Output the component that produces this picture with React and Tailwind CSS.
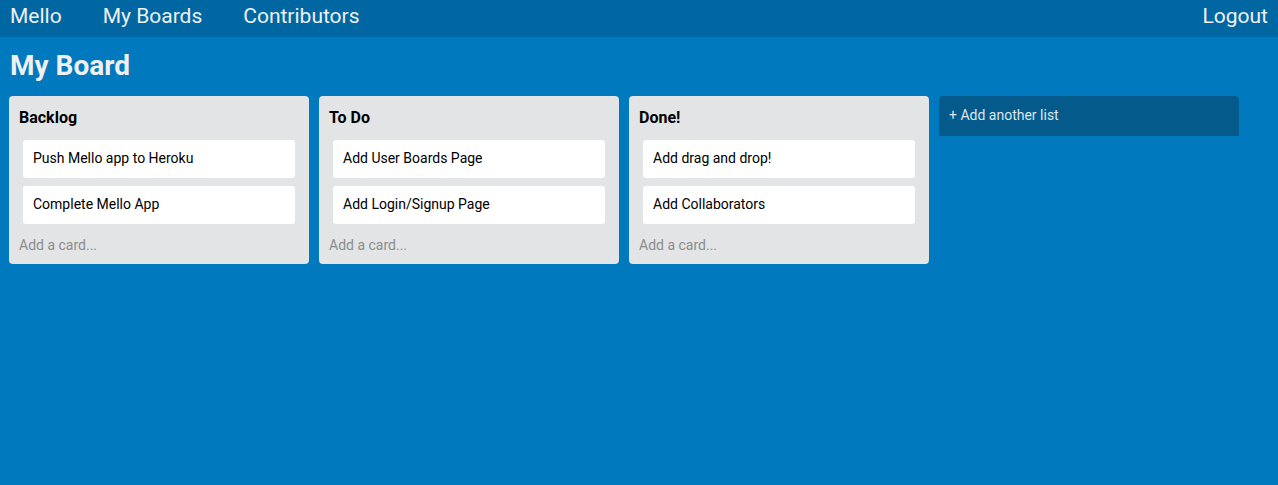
const lists = [
  { title: "Backlog", cards: ["Push Mello app to Heroku", "Complete Mello App"] },
  { title: "To Do", cards: ["Add User Boards Page", "Add Login/Signup Page"] },
  { title: "Done!", cards: ["Add drag and drop!", "Add Collaborators"] },
];

function List({ title, cards }) {
  return (
    <div className="w-[300px] shrink-0 rounded-[4px] bg-[#e2e4e6] px-[10px] pt-[11px] pb-[9px]">
      <h3 className="text-[16px] font-bold leading-[22px] text-black">{title}</h3>
      <div className="mt-[11px] flex flex-col gap-[8px] px-[4px]">
        {cards.map((c) => (
          <div key={c} className="h-[38px] rounded-[3px] bg-white px-[10px] text-[14px] leading-[36px] text-black">
            {c}
          </div>
        ))}
      </div>
      <div className="mt-[11px] text-[14px] leading-[20px] text-[#8c8c8c]">Add a card...</div>
    </div>
  );
}

export default function App() {
  return (
    <div className="min-h-[485px] bg-[#0079bf] font-['Roboto',sans-serif]">
      <nav className="flex h-[37px] items-center bg-[#0067a3] px-[10px] pb-[3px] text-[21px] text-[#f0f0f0]">
        <span>Mello</span>
        <span className="ml-[41px]">My Boards</span>
        <span className="ml-[41px]">Contributors</span>
        <span className="ml-auto">Logout</span>
      </nav>
      <h1 className="px-[10px] pt-[11px] pb-[13px] text-[28px] font-bold leading-[35px] text-[#f0f0f0]">My Board</h1>
      <div className="flex items-start gap-[10px] px-[9px]">
        {lists.map((l) => (
          <List key={l.title} {...l} />
        ))}
        <div className="flex h-[40px] w-[300px] items-center rounded-t-[4px] bg-[#055a8c] px-[10px] pb-[2px] text-[14px] text-[#dde6ee]">
          + Add another list
        </div>
      </div>
    </div>
  );
}
